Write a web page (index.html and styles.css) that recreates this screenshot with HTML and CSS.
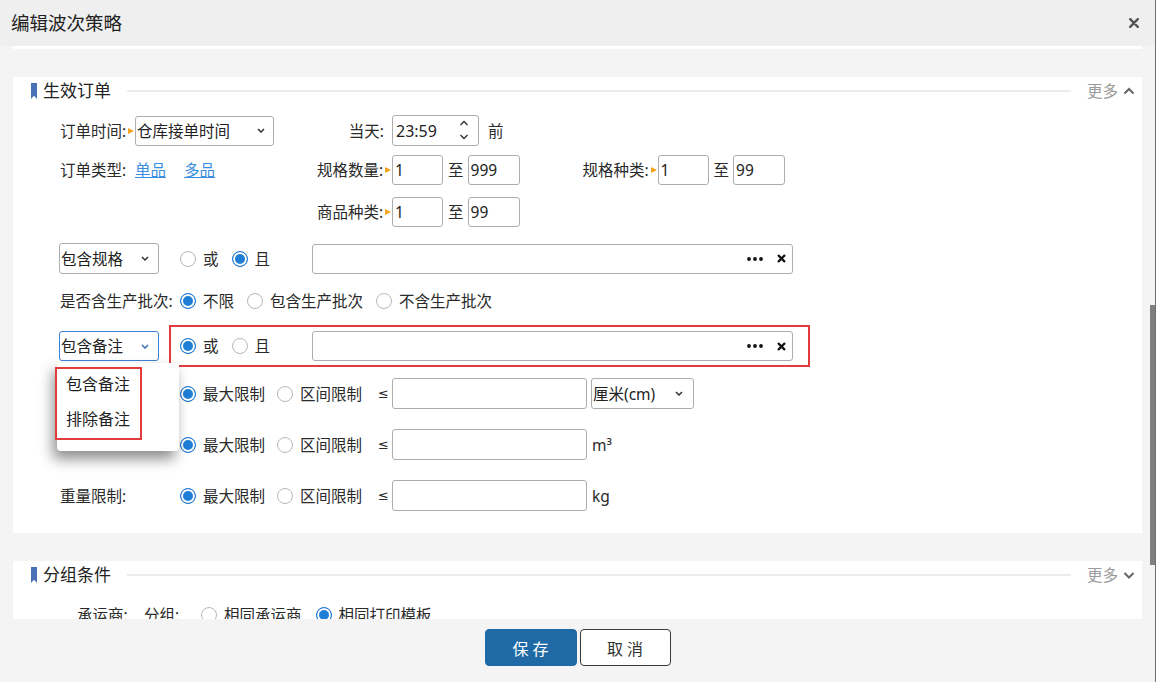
FILE: index.html
```html
<!DOCTYPE html>
<html lang="zh-CN">
<head>
<meta charset="utf-8">
<title>编辑波次策略</title>
<link rel="stylesheet" href="styles.css">
</head>
<body>
<div class="dialog">
  <header class="dlg-head">
    <h1 class="dlg-title">编辑波次策略</h1>
    <svg class="dlg-close" width="10" height="10" viewBox="0 0 10 10"><path d="M1.2 1.2L8.8 8.8M8.8 1.2L1.2 8.8" stroke="#555" stroke-width="2.4" stroke-linecap="round"/></svg>
  </header>
  <div class="dlg-body">
    <div class="scroll">
      <div class="card-tail"></div>
      <section class="card card-order">
        <div class="sec-head">
          <svg class="sec-icon" width="6" height="16" viewBox="0 0 6 16"><path d="M0 0H6V16L3 12.8L0 16Z" fill="#4a70b6"/></svg>
          <span class="sec-title">生效订单</span>
          <span class="sec-line"></span>
          <span class="sec-more">更多</span>
          <svg class="sec-chev" width="12" height="10" viewBox="0 0 12 10"><path d="M1.5 7.5L6 3L10.5 7.5" fill="none" stroke="#666" stroke-width="2"/></svg>
        </div>

        <div class="row r1">
          <span class="lbl">订单时间:<i class="mark"></i></span>
          <div class="sel sel-time"><span>仓库接单时间</span><svg class="chev" width="8" height="5" viewBox="0 0 8 5"><path d="M1 1L4 4L7 1" fill="none" stroke="#333" stroke-width="1.5"/></svg></div>
          <span class="lbl-r">当天:</span>
          <div class="time"><span>23:59</span><svg class="spin" width="10" height="22" viewBox="0 0 10 22"><path d="M1.5 6L5 2.5L8.5 6M1.5 16L5 19.5L8.5 16" fill="none" stroke="#333" stroke-width="1.4"/></svg></div>
          <span class="suffix">前</span>
        </div>

        <div class="row r2">
          <span class="lbl">订单类型:</span>
          <span class="links"><a class="lnk">单品</a><a class="lnk">多品</a></span>
          <span class="lbl">规格数量:<i class="mark"></i></span>
          <input class="ipt ipt-s" value="1"><span class="zhi">至</span><input class="ipt ipt-s2" value="999">
          <span class="lbl lbl-3">规格种类:<i class="mark"></i></span>
          <input class="ipt ipt-s" value="1"><span class="zhi">至</span><input class="ipt ipt-s2" value="99">
        </div>

        <div class="row r3">
          <span class="lbl lbl-off">商品种类:<i class="mark"></i></span>
          <input class="ipt ipt-s" value="1"><span class="zhi">至</span><input class="ipt ipt-s2" value="99">
        </div>

        <div class="row r4">
          <div class="sel sel-cond"><span>包含规格</span><svg class="chev" width="8" height="5" viewBox="0 0 8 5"><path d="M1 1L4 4L7 1" fill="none" stroke="#333" stroke-width="1.5"/></svg></div>
          <div class="r-cond r-cond-4">
            <span class="radio"></span><span class="rt rt-or">或</span>
            <span class="radio on"></span><span class="rt">且</span>
          </div>
          <div class="picker">
            <svg width="16" height="4" viewBox="0 0 16 4" fill="#111"><circle cx="2" cy="2" r="1.9"/><circle cx="8" cy="2" r="1.9"/><circle cx="14" cy="2" r="1.9"/></svg>
            <svg class="pk-x" width="9" height="9" viewBox="0 0 9 9"><path d="M1 1L8 8M8 1L1 8" stroke="#111" stroke-width="2.4"/></svg>
          </div>
        </div>

        <div class="row r5">
          <span class="lbl-w">是否含生产批次:</span>
          <span class="radio on"></span><span class="rt rt-gap">不限</span>
          <span class="radio"></span><span class="rt rt-gap">包含生产批次</span>
          <span class="radio"></span><span class="rt">不含生产批次</span>
        </div>

        <div class="row r6">
          <div class="sel-wrap">
            <div class="sel sel-cond sel-focus"><span>包含备注</span><svg class="chev" width="8" height="5" viewBox="0 0 8 5"><path d="M1 1L4 4L7 1" fill="none" stroke="#3a6fb0" stroke-width="1.5"/></svg></div>
            <ul class="dropdown">
              <li>包含备注</li>
              <li>排除备注</li>
            </ul>
            <div class="mark-box mark-box-dd"></div>
          </div>
          <div class="hl">
            <div class="r-cond">
              <span class="radio on"></span><span class="rt rt-or">或</span>
              <span class="radio"></span><span class="rt">且</span>
            </div>
            <div class="picker">
              <svg width="16" height="4" viewBox="0 0 16 4" fill="#111"><circle cx="2" cy="2" r="1.9"/><circle cx="8" cy="2" r="1.9"/><circle cx="14" cy="2" r="1.9"/></svg>
              <svg class="pk-x" width="9" height="9" viewBox="0 0 9 9"><path d="M1 1L8 8M8 1L1 8" stroke="#111" stroke-width="2.4"/></svg>
            </div>
          </div>
        </div>

        <div class="row r7">
          <span class="lbl-w"></span>
          <span class="radio on"></span><span class="rt rt-max">最大限制</span>
          <span class="radio"></span><span class="rt rt-rng">区间限制</span>
          <span class="le">≤</span>
          <input class="ipt ipt-l" value="">
          <div class="sel sel-unit"><span>厘米(cm)</span><svg class="chev" width="8" height="5" viewBox="0 0 8 5"><path d="M1 1L4 4L7 1" fill="none" stroke="#333" stroke-width="1.5"/></svg></div>
        </div>

        <div class="row r8">
          <span class="lbl-w"></span>
          <span class="radio on"></span><span class="rt rt-max">最大限制</span>
          <span class="radio"></span><span class="rt rt-rng">区间限制</span>
          <span class="le">≤</span>
          <input class="ipt ipt-l" value="">
          <span class="unit">m³</span>
        </div>

        <div class="row r9">
          <span class="lbl-w">重量限制:</span>
          <span class="radio on"></span><span class="rt rt-max">最大限制</span>
          <span class="radio"></span><span class="rt rt-rng">区间限制</span>
          <span class="le">≤</span>
          <input class="ipt ipt-l" value="">
          <span class="unit">kg</span>
        </div>
      </section>

      <section class="card card-group">
        <div class="sec-head">
          <svg class="sec-icon" width="6" height="16" viewBox="0 0 6 16"><path d="M0 0H6V16L3 12.8L0 16Z" fill="#4a70b6"/></svg>
          <span class="sec-title">分组条件</span>
          <span class="sec-line"></span>
          <span class="sec-more">更多</span>
          <svg class="sec-chev" width="12" height="10" viewBox="0 0 12 10"><path d="M1.5 3L6 7.5L10.5 3" fill="none" stroke="#666" stroke-width="2"/></svg>
        </div>
        <div class="row g1">
          <span class="g-lbl1">承运商:</span>
          <span class="g-lbl2">分组:</span>
          <span class="radio"></span><span class="rt rt-g">相同承运商</span>
          <span class="radio on"></span><span class="rt">相同打印模板</span>
        </div>
      </section>
    </div>
    <div class="scrollbar"><div class="thumb"></div></div>
  </div>
  <footer class="dlg-foot">
    <button class="btn btn-primary">保 存</button>
    <button class="btn btn-default">取 消</button>
  </footer>
</div>
</body>
</html>
```

FILE: styles.css
```css
* { box-sizing: border-box; }
html, body { margin: 0; padding: 0; }
body {
  font-family: "Noto Sans", "Noto Sans CJK SC", sans-serif;
  font-size: 15.5px;
  line-height: 20px;
  color: #2a2a2a;
  background: #f4f4f4;
}
.dialog {
  width: 1156px;
  height: 682px;
  display: flex;
  flex-direction: column;
  border-right: 1px solid #707070;
  background: #f4f4f4;
  overflow: hidden;
}
.dlg-head {
  flex: none;
  height: 46px;
  background: #efefef;
  display: flex;
  align-items: center;
  justify-content: space-between;
  padding: 0 16px 0 11px;
}
.dlg-title {
  margin: 0;
  font-size: 18.5px;
  font-weight: normal;
  color: #222;
  line-height: 24px;
}
.dlg-close { display: block; }
.dlg-body {
  flex: none;
  height: 573px;
  display: flex;
  overflow: hidden;
}
.scroll { flex: 1; min-width: 0; overflow: hidden; }
.scrollbar { flex: none; width: 5px; }
.thumb { margin-top: 259px; height: 260px; background: #7f7f7f; }
.card-tail { height: 3px; margin: 0 8px 0 13px; background: #fff; }
.card { margin: 28px 8px 0 13px; background: #fff; }
.card-order { padding-bottom: 22px; }
.card-group { height: 90px; }

.sec-head {
  height: 28px;
  display: flex;
  align-items: center;
  padding: 0 7px 0 18px;
}
.sec-icon { display: block; flex: none; }
.sec-title { margin-left: 6px; font-size: 17px; color: #222; line-height: 24px; }
.sec-line { flex: 1; height: 2px; background: #ececec; margin: 0 16px; }
.sec-more { color: #9a9a9a; }
.sec-chev { display: block; margin-left: 5px; }

.row { display: flex; align-items: center; padding-left: 47px; }
.r1 { margin-top: 10px; height: 31px; }
.r2 { margin-top: 9px; height: 30px; }
.r3 { margin-top: 12px; height: 30px; }
.r4 { margin-top: 16px; height: 31px; padding-left: 46px; }
.r5 { margin-top: 17px; height: 20px; }
.r6 { margin-top: 14px; height: 42px; padding-left: 46px; }
.r7 { margin-top: 11px; height: 31px; }
.r8 { margin-top: 20px; height: 31px; }
.r9 { margin-top: 20px; height: 31px; }
.g1 { margin-top: 16px; height: 20px; padding-left: 64px; }

.lbl {
  flex: none;
  width: 75px;
  display: flex;
  align-items: center;
  justify-content: space-between;
  white-space: nowrap;
}
.lbl-3 { margin-left: 63px; }
.lbl-off { margin-left: 257px; }
.lbl-w { flex: none; width: 120px; white-space: nowrap; }
.mark {
  display: block;
  width: 0;
  height: 0;
  margin-right: 1px;
  border-left: 6px solid #f5a31a;
  border-top: 3.5px solid transparent;
  border-bottom: 3.5px solid transparent;
}
.lbl-r { flex: none; width: 118px; padding-right: 8px; text-align: right; }
.suffix { margin-left: 9px; }

.sel {
  flex: none;
  height: 30px;
  border: 1px solid #adadad;
  border-radius: 3px;
  background: #fff;
  display: flex;
  align-items: center;
  justify-content: space-between;
  padding: 0 8px 0 1px;
  color: #222;
  white-space: nowrap;
}
.chev { display: block; flex: none; }
.sel-time { width: 139px; padding-right: 8px; }
.sel-cond { width: 100px; height: 31px; padding-right: 9px; }
.sel-focus { height: 30px; border-color: #3c82d6; }
.sel-unit { width: 103px; height: 31px; margin-left: 4px; padding-right: 10px; }

.time {
  flex: none;
  width: 87px;
  height: 31px;
  border: 1px solid #adadad;
  border-radius: 3px;
  display: flex;
  align-items: center;
  justify-content: space-between;
  padding: 0 9px 0 3px;
  font-size: 16px;
  color: #222;
}
.spin { display: block; margin-top: -2px; }

.links { flex: none; width: 182px; display: flex; }
.lnk { color: #3a8ee0; text-decoration: underline; margin-right: 18px; cursor: pointer; }

.ipt {
  flex: none;
  height: 30px;
  border: 1px solid #adadad;
  border-radius: 3px;
  padding: 0 2px;
  font: inherit;
  color: #222;
  background: #fff;
  outline: none;
}
.ipt-s { width: 51px; }
.ipt-s2 { width: 52px; }
.ipt-l { width: 195px; height: 31px; }
.zhi { flex: none; margin: 0 4px 0 5px; }

.radio {
  flex: none;
  width: 16px;
  height: 16px;
  border-radius: 50%;
  border: 1px solid #b7b7b7;
  background: #fff;
}
.radio.on {
  border: 1.5px solid #1e78d0;
  background: #1f7fd6;
  box-shadow: inset 0 0 0 2px #fff;
}
.rt { margin-left: 7px; white-space: nowrap; }
.rt-or { margin-right: 13px; }
.rt-gap { margin-right: 13px; }
.rt-max { margin-right: 12px; }
.rt-rng { margin-right: 16px; }
.rt-g { margin-right: 14px; }
.le {
  flex: none;
  width: 14px;
  font-family: "DejaVu Sans", sans-serif;
  font-size: 13px;
}
.unit { margin-left: 5px; }

.r-cond { flex: none; width: 132px; display: flex; align-items: center; }
.r-cond-4 { margin-left: 21px; }

.picker {
  flex: none;
  width: 481px;
  height: 30px;
  border: 1px solid #adadad;
  border-radius: 3px;
  background: #fff;
  display: flex;
  align-items: center;
  justify-content: flex-end;
  padding-right: 6px;
}
.picker svg { display: block; }
.pk-x { margin-left: 14px; }

.hl {
  flex: none;
  margin-left: 10px;
  height: 42px;
  border: 2px solid #e23c3c;
  display: flex;
  align-items: center;
  padding: 0 15px 0 9px;
}

.sel-wrap { position: relative; flex: none; }
.dropdown {
  position: absolute;
  left: -2px;
  top: 32px;
  z-index: 5;
  width: 122px;
  height: 88px;
  margin: 0;
  padding: 4px 0 0;
  list-style: none;
  background: #fff;
  border-radius: 0 0 4px 4px;
  box-shadow: -4px 8px 14px rgba(0, 0, 0, 0.45);
}
.dropdown li { height: 35px; line-height: 35px; padding-left: 9px; color: #222; white-space: nowrap; font-size: 16px; }
.mark-box {
  position: absolute;
  z-index: 6;
  border: 2px solid #e23c3c;
}
.mark-box-dd { left: -4px; top: 36px; width: 87px; height: 73px; }

.g-lbl1 { flex: none; width: 67px; }
.g-lbl2 { flex: none; width: 57px; }

.dlg-foot {
  flex: none;
  height: 63px;
  display: flex;
  justify-content: center;
  align-items: flex-start;
  gap: 3px;
  padding-top: 10px;
  background: #f4f4f4;
}
.btn {
  height: 37px;
  border-radius: 4px;
  font-family: "Noto Sans", "Noto Sans CJK SC", sans-serif;
  font-size: 16px;
  cursor: pointer;
}
.btn-primary { width: 92px; border: 1px solid #1f6aa6; background: #1f6aa6; color: #fff; }
.btn-default { width: 91px; border: 1px solid #3a3a3a; background: #fff; color: #333; }
```
